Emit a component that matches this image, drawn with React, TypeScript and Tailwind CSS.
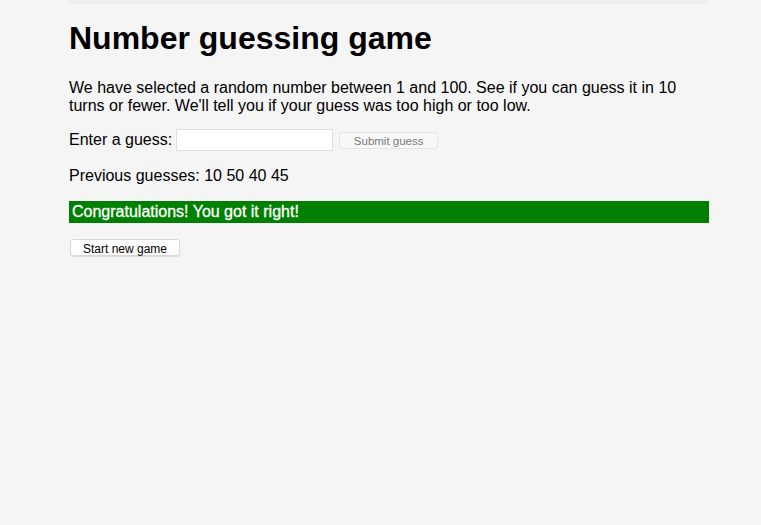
export default function App() {
  return (
    <div className="min-h-[525px] w-full bg-[#f5f5f5] font-['Liberation_Sans',Arial,sans-serif] text-black">
      <div className="ml-[69px] w-[640px]">
        <div className="h-[4px] bg-[#efefef]" />
        <h1 className="mt-[16px] text-[32px] font-bold leading-[37px]">Number guessing game</h1>
        <p className="mt-[22px] text-[16px] leading-[18px]">
          We have selected a random number between 1 and 100. See if you can guess it in 10 turns or fewer. We'll tell you if your guess was too high or too low.
        </p>
        <div className="mt-[13px] flex items-center text-[16px]">
          <label>Enter a guess:</label>
          <input
            type="text"
            className="ml-[4px] h-[22px] w-[157px] border border-[#e0e0e0] bg-white"
          />
          <button
            disabled
            className="ml-[6px] h-[17px] w-[99px] rounded-[3px] border border-[#e4e4e4] bg-[#f8f8f8] text-[11.5px] text-[#7a7a7a]"
          >
            Submit guess
          </button>
        </div>
        <p className="mt-[15px] text-[16px] leading-[18px]">Previous guesses: 10 50 40 45</p>
        <div className="mt-[16px] h-[22px] bg-[#008000] pl-[3px] text-[16px] leading-[22px] text-white [-webkit-text-stroke:0.3px_white]">
          Congratulations! You got it right!
        </div>
        <button className="ml-[1px] mt-[16px] h-[17px] w-[110px] rounded-[3px] border border-[#d8d8d8] bg-white text-[12px] shadow-[0_1px_1px_rgba(0,0,0,0.1)]">
          Start new game
        </button>
      </div>
    </div>
  );
}
